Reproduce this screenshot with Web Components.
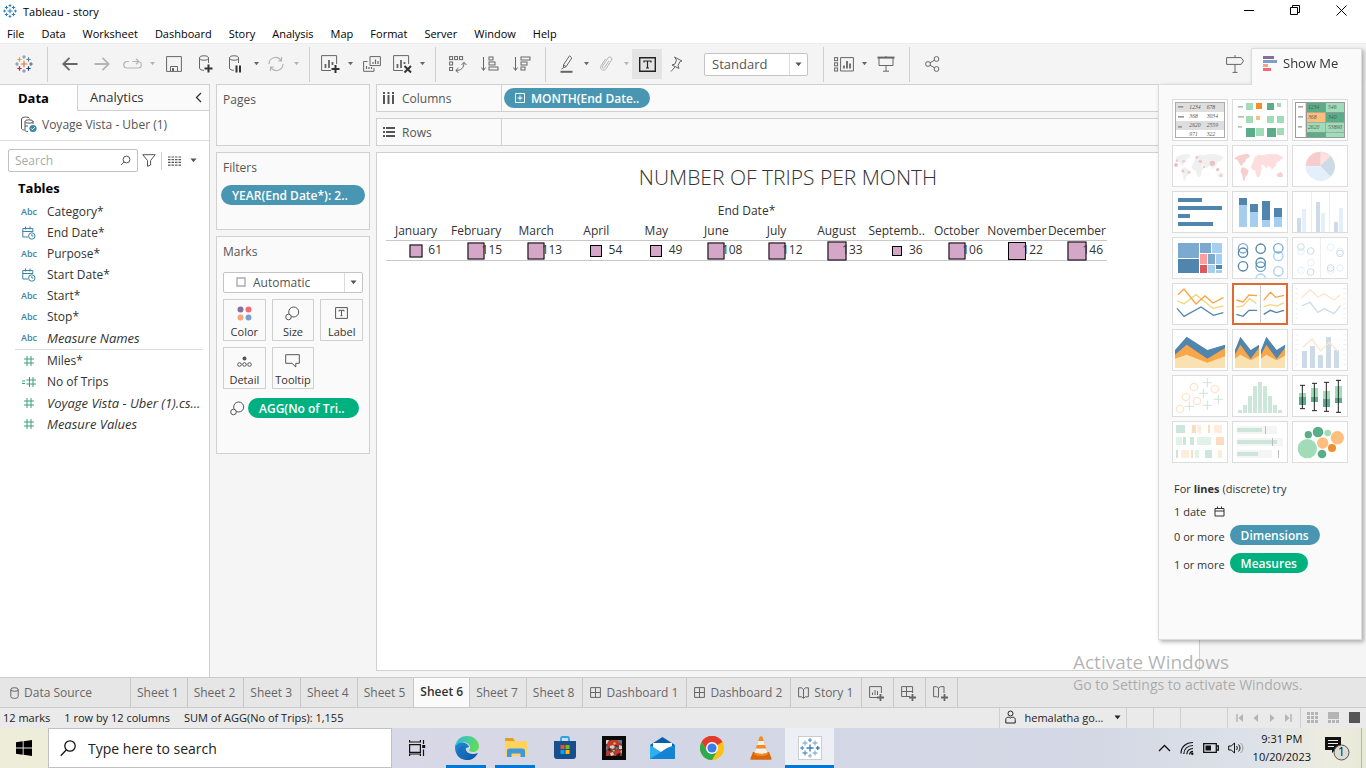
<!DOCTYPE html>
<html lang="en">
<head>
<meta charset="utf-8">
<title>Tableau - story</title>
<style>
html, body { margin: 0; }
body { font-family: "Open Sans", "Noto Sans", sans-serif; font-size: 12px; color: #333; background: #f5f5f5; }
</style>
</head>
<body>
<desktop-screen></desktop-screen>
<script>
/* ---------- helpers ---------- */
function define(name, css, render) {
  customElements.define(name, class extends HTMLElement {
    connectedCallback() {
      if (this.shadowRoot) return;
      const root = this.attachShadow({ mode: "open" });
      root.innerHTML = `<style>*{box-sizing:border-box}button,select,input{font:inherit;color:inherit;margin:0;outline:0}
button{border:0;background:none;padding:0}a{color:inherit;text-decoration:none}svg{display:block}${css}</style>${typeof render === "function" ? render(this) : render}`;
    }
  });
}
const plus = (x, y, r, c, w = 1) => `<path d="M${x - r} ${y}H${x + r}M${x} ${y - r}V${y + r}" stroke="${c}" stroke-width="${w}"/>`;
function logo(s, colors, w) {
  const k = s / 18, p = (x, y, r, i) => plus(x * k, y * k, r * k, colors[i % colors.length], w);
  return p(9, 9, 3.2, 0) + p(4.5, 4.5, 2.2, 1) + p(13.5, 4.5, 2.2, 2) + p(4.5, 13.5, 2.2, 3) + p(13.5, 13.5, 2.2, 4)
    + p(9, 2, 1.8, 5) + p(2, 9, 1.8, 6) + p(16, 9, 1.8, 7) + p(9, 16, 1.8, 8);
}
const cyl = `<path d="M3.5 3v10c0 1.5 2 2.300 4.500 2.300M12.500 3v5"/><ellipse cx="8" cy="3" rx="4.500" ry="2.200"/>`;
const dot = (x, y, w = 3, h = 3) => `<rect x="${x}" y="${y}" width="${w}" height="${h}"/>`;

/* name: [width, height, markup]; strokes take the current colour */
const ICONS = {
  logo: [18, 18, logo(18, ["#e8762d", "#eb9c45", "#5b879b", "#c72037", "#1f447e", "#7199a6", "#7199a6", "#59657f", "#7c84a8"], 1.2)],
  logoBlue: [14, 14, logo(14, ["#2f80b8"], 1)],
  logoTask: [20, 20, logo(20, ["#3a7fb0", "#8fb8d4", "#8fb8d4", "#5c9ac0", "#8fb8d4", "#5c9ac0", "#5c9ac0"], 1.3)],
  back: [16, 14, `<path d="M15.500 7H1.500M7.500 .8L1.200 7l6.300 6.200" stroke-width="1.800"/>`],
  fwd: [16, 14, `<path d="M.5 7h14M8.500 .8L14.800 7l-6.300 6.200" stroke-width="1.800"/>`],
  redo: [19, 12, `<path d="M6 3.500H4a3.200 3.200 0 0 0 0 6.500h11a3.200 3.200 0 0 0 0-6.500H9M13 .8l2.800 2.700L13 6.200" stroke-width="1.200"/>`],
  caret: [7, 5, `<path d="M.5 .5h6L3.500 4.200z" fill="currentColor" stroke="none"/>`],
  caretSmall: [5, 4, `<path d="M0 0h5L2.500 3.200z" fill="currentColor" stroke="none"/>`],
  save: [16, 16, `<path d="M.6 .6h14.800v14.800H.6zM4.500 15V10.500h7V15" /><path d="M6 12h2v3H6z" fill="currentColor" stroke="none"/>`],
  dbadd: [16, 18, `<g transform="translate(-2 0)">${cyl}</g><path d="M10.500 9.500v8M6.500 13.500h8" stroke="#333" stroke-width="2"/>`],
  dbpause: [16, 18, `<g transform="translate(-2 0)">${cyl}</g><path d="M8.500 10.500v7M12 10.500v7" stroke="#333" stroke-width="2"/>`],
  refresh: [18, 16, `<path d="M2 8a6.500 6.500 0 0 1 12-3.500M16 8a6.500 6.500 0 0 1-12 3.500M14.500 1v4H11M3.500 15v-4H7" stroke-width="1.200"/>`],
  newsheet: [19, 18, `<path d="M10 15.500H.6V.6h15V9"/><path d="M4.500 13V9M8 13V5M11.500 10V7" stroke-width="1.800"/><path d="M14.500 10v8M10.500 14h8" stroke="#333" stroke-width="2"/>`],
  dup: [18, 16, `<path d="M7 .6h10.400v9H7zM4.500 5.500H.6v9.800H11V12"/><path d="M10 8V6M12.500 8V3.500M15 8V5M3.500 13v-3M6 13v-2M8.500 13v-2" stroke-width="1.200"/>`],
  clear: [19, 18, `<path d="M10 15.500H.6V.6h15V9"/><path d="M4.500 13V9M8 13V5M11.500 9V7" stroke-width="1.800"/><path d="M11.500 11l6.500 6.500M18 11l-6.500 6.500" stroke="#333" stroke-width="2"/>`],
  swap: [18, 17, `${dot(.6, .6)}${dot(5.600, .6)}${dot(10.600, .6)}${dot(.6, 6)}${dot(.6, 11.500)}<path d="M7 14.500c5 0 8-2.500 8-8M12.500 9L15 6.300 17.500 9M9.500 12L6.800 14.500 9.500 16.800"/>`],
  sortup: [18, 16, `<path d="M2.500 1v13M.5 11.500L2.500 14.500l2-3"/>${dot(8, 1, 4, 3)}${dot(8, 6, 6, 3)}${dot(8, 11, 9, 3)}`],
  sortdown: [18, 16, `<path d="M2.500 1v13M.5 11.500L2.500 14.500l2-3"/>${dot(8, 1, 9, 3)}${dot(8, 6, 6, 3)}${dot(8, 11, 4, 3)}`],
  pen: [13, 18, `<path d="M9.500 .8l-6 9v3l2.500-1L11.800 3z M3.500 10l2.500 1.500M3 13l-1.500 1"/><path d="M.5 16.800h12" stroke-width="2"/>`],
  clip: [14, 16, `<path d="M9.800 5L5.500 11.500c-1 1.500-3 .3-2-1.300L9 2c1.600-2.300 5-.3 3.500 2L7 12.800c-2 3.200-7 .3-5-3L6.500 3"/>`],
  text: [17, 15, `<path d="M.7 .7h15.600v13.600H.7z" stroke-width="1.400"/><path d="M5 5.500V4h7v1.500M8.500 4v7M7 11h3" stroke-width="1.200"/>`],
  textSmall: [13, 12, `<path d="M.6 .6h11.800v10.800H.6z"/><path d="M4 4.500V3.300h5v1.200M6.500 3.300v5.400M5.500 8.700h2"/>`],
  pin: [13, 16, `<path d="M4.500 1l7.500 4-2 .5-2 4 1 3L2 9l3-1 1.500-4zM5 11l-4 4.500"/>`],
  cards: [20, 15, `${dot(.6, .6)}${dot(.6, 5.800)}${dot(.6, 11)}<path d="M6.600 .6h12.800v13.400H6.600z"/><path d="M10 11.500V8.500M13 11.500V4M16 11.500V6.500" stroke-width="1.800"/>`],
  present: [18, 16, `<path d="M.5 1.600h17" stroke-width="2"/><path d="M2 2v7.500h14V2M9 9.500v5.500M6 15.200h6M9 0v1"/>`],
  share: [15, 16, `<circle cx="3" cy="8" r="2.400"/><circle cx="11.500" cy="3" r="2.400"/><circle cx="11.500" cy="13" r="2.400"/><path d="M5 6.800l4.500-2.600M5 9.200l4.500 2.600"/>`],
  sign: [18, 18, `<path d="M.6 2.600h14.500l2.400 3.400-2.400 3.400H.6zM9 0v2.500M9 9.500v8M6.500 17.400h5"/>`],
  showme: [14, 15, `<g stroke="none"><path fill="#84709b" d="M0 0h11v3H0z"/><path fill="#7ba1cb" d="M0 4h14v3H0z"/><path fill="#f4a77c" d="M0 8h5v3H0z"/><path fill="#f76877" d="M0 12h8v3H0z"/></g>`],
  chevL: [7, 11, `<path d="M6 1L1.500 5.500 6 10" stroke-width="1.300"/>`],
  source: [17, 17, `<path d="M1.500 3v9.500c0 1 1.500 1.500 3 1.500M1.500 3c0-2.500 8-2.500 8-.5M13 5v3"/><ellipse cx="9" cy="5.500" rx="4" ry="1.700"/><path d="M5 5.500V14c0 1 1 1.500 3 1.500M5 10h3"/><circle cx="13" cy="12.500" r="3.600" fill="#3e87a8" stroke="none"/><path d="M11.300 12.500l1.200 1.300 2.200-2.500" stroke="#fff"/>`],
  search: [11, 11, `<circle cx="6.500" cy="4.500" r="3.400"/><path d="M4 7L1 10"/>`],
  funnel: [14, 13, `<path d="M.8 .7h12.400L8.600 6.500v4.500L5.500 12.300V6.500z"/>`],
  rows4: [13, 10, `<path d="M0 1h13M0 3.700h13M0 6.400h13M0 9.100h13" stroke-width="1.200" stroke-dasharray="2.500 1"/>`],
  hash: [12, 12, `<path d="M1 4h10M1 8h10M4 1v10M8 1v10"/>`],
  hashCalc: [15, 12, `<path d="M4.500 4H14M4.500 8H14M7.500 1v10M11 1v10M0 5h3M0 7.500h3"/>`],
  date: [14, 14, `<path d="M.8 6V2.500h10V6M.8 5.500h10M.8 5.500v5.500H6M3.500 .5v3M8 .5v3"/><circle cx="9.800" cy="10" r="3.200"/><path d="M9.800 8.300V10h1.500"/>`],
  cal: [11, 11, `<path d="M1 2.500h9v7.500H1zM1 5h9M3.500 .5v2.500M7.500 .5v2.500"/>`],
  cols: [12, 12, `<g fill="currentColor" stroke="none"><path d="M0 0h2v2H0zM4.500 0h2v2h-2zM9 0h2v2H9zM0 3h2v9H0zM4.500 3h2v9h-2zM9 3h2v9H9z"/></g>`],
  rows: [12, 11, `<g fill="currentColor" stroke="none"><path d="M0 0h2v2H0zM0 4h2v2H0zM0 8h2v2H0zM3 0h9v2H3zM3 4h9v2H3zM3 8h9v2H3z"/></g>`],
  plusbox: [10, 10, `<path d="M.5 .5h9v9h-9zM2.500 5h5M5 2.500v5"/>`],
  color: [15, 15, `<g stroke="none"><circle cx="3.500" cy="3.500" r="3" fill="#84709b"/><circle cx="11.500" cy="3.500" r="3" fill="#f76877"/><circle cx="3.500" cy="11.500" r="3" fill="#f4a77c"/><circle cx="11.500" cy="11.500" r="3" fill="#7ba1cb"/></g>`],
  size: [15, 15, `<circle cx="8.700" cy="6" r="5"/><circle cx="3.500" cy="11" r="2.800" fill="#fafafa"/>`],
  detail: [15, 11, `<circle cx="7.500" cy="2.500" r="2" fill="currentColor" stroke="none"/><circle cx="2.500" cy="8.500" r="1.800"/><circle cx="7.500" cy="8.500" r="1.800"/><circle cx="12.500" cy="8.500" r="1.800"/>`],
  tip: [15, 14, `<path d="M.7 .7h13.600v8.600h-3.500v3.700L7 9.300H.7z"/>`],
  square: [10, 10, `<path d="M1 1h8v8H1z" stroke="#aaa" stroke-width="1.400"/>`],
  ds: [9, 12, `<ellipse cx="4.500" cy="2.500" rx="3.700" ry="1.800"/><path d="M.8 2.500v7c0 2.500 7.400 2.500 7.400 0v-7"/>`],
  dash: [11, 11, `<path d="M.6 .6h9.800v9.800H.6zM5.500 .6v9.800M.6 5.500h9.800"/>`],
  story: [11, 12, `<path d="M5.500 2.500L3.500 .8H.6v9h3l1.900 1.500 1.900-1.500h3v-9H7.500zM5.500 2.500v8.500"/>`],
  newws: [16, 16, `<path d="M9 11.500H.6V.6h11.800V7M3.500 9V6.500M6 9V4M8.500 9V5"/><path d="M11.500 8v7M8 11.500h7" stroke-width="1.800"/>`],
  newdash: [16, 16, `<path d="M9 10.500H.6V.6h11V7M5.500 .6v10M.6 5.500h11"/><path d="M11.500 8v7M8 11.500h7" stroke-width="1.800"/>`],
  newstory: [16, 16, `<path d="M5.500 2L3.500 .7H.6v10h3l1.900 1M5.500 2v9M5.500 2L7.500 .7h3.500V7"/><path d="M11.500 8v7M8 11.500h7" stroke-width="1.800"/>`],
  user: [11, 15, `<circle cx="5.500" cy="3.500" r="2.500"/><path d="M.8 13V9.500c0-2 2-3 4.700-1.500 2.700-1.500 4.700-.5 4.700 1.500V13z"/>`],
  first: [8, 8, `<path d="M1 0v8" stroke-width="1.500"/><path d="M7 0v8L2.500 4z" fill="currentColor" stroke="none"/>`],
  prev: [8, 8, `<path d="M6 0v8L1.500 4z" fill="currentColor" stroke="none"/>`],
  next: [8, 8, `<path d="M2 0v8l4.500-4z" fill="currentColor" stroke="none"/>`],
  last: [8, 8, `<path d="M7 0v8" stroke-width="1.500"/><path d="M1 0v8l4.500-4z" fill="currentColor" stroke="none"/>`],
  grid9: [11, 11, `<path d="M0 1.500h11M0 5.500h11M0 9.500h11" stroke-width="3" stroke-dasharray="3 1"/>`],
  film: [11, 11, `<path d="M0 0h11v7H0z" fill="currentColor" stroke="none"/><path d="M0 9.500h11" stroke-width="3" stroke-dasharray="3 1"/>`],
  full: [11, 11, `<path d="M0 0h11v11H0z" fill="currentColor" stroke="none"/>`],
  min: [10, 10, `<path d="M0 5.500h10"/>`],
  max: [10, 10, `<path d="M.5 2.500h7v7h-7zM2.500 2.500v-2h7v7h-2"/>`],
  close: [11, 11, `<path d="M.5 .5l10 10M10.500 .5l-10 10"/>`],
  win: [16, 16, `<path d="M0 2.300L6.700 1.300V7.600H0zM7.600 1.200L16 0V7.600H7.600zM0 8.500H6.700V14.700L0 13.800zM7.600 8.500H16V16L7.600 14.800z" fill="#000" stroke="none"/>`],
  searchBig: [16, 17, `<circle cx="10" cy="6" r="5.200" stroke-width="1.300"/><path d="M6.200 10L.8 15.800" stroke-width="1.300"/>`],
  taskview: [17, 16, `<path d="M.6 4.600h10.800v7.800H.6zM.6 0v2h10.800V0M.6 16v-2h10.800v2M14.500 0v4M14.500 9.500V16" stroke-width="1.200"/><path d="M13.200 5h3v3h-3z" fill="currentColor" stroke="none"/>`],
  edge: [26, 26, `<defs><linearGradient id="e1" x1="0" y1="0" x2="1" y2=".3"><stop offset="0" stop-color="#2bb6e8"/><stop offset="1" stop-color="#5fdc5c"/></linearGradient><linearGradient id="e2" x1="0" y1="0" x2="1" y2="1"><stop offset="0" stop-color="#1c8fdc"/><stop offset="1" stop-color="#0c4f9e"/></linearGradient></defs><g stroke="none"><path fill="url(#e2)" d="M1 12c0-4 6-6 10-4 3 1.500 4 3 4 4l-3 1c-1 3 3 8 12 5-3 6-8 7.500-12 7C5 24.500 1 19 1 12z"/><path fill="url(#e1)" d="M1 12C2 4 8 1 13 1c7 0 12 5 12 10.500C25 15 22 17 19 17c-2.500 0-4.500-.8-4-2 1-1 1.300-2 1-3.500C15 7.500 10 6.500 7 7.500 4 8.500 2 10 1 12z"/><path fill="#1a6ab8" d="M10 11c-3 4 0 12 6 13.500-6 1-12-2-12-8 0-3 3-5.500 6-5.500z" opacity=".6"/></g>`],
  explorer: [24, 20, `<g stroke="none"><path fill="#e6a11c" d="M1 0h8l2 3h11v4H1z"/><path fill="#ffd35c" d="M1 3h22v15H1z"/><path fill="#3f97dc" d="M3 19v-6c0-1.500 1-2.500 2.500-2.500h13c1.500 0 2.500 1 2.500 2.500v6h-4.500v-3.500h-9V19z"/></g>`],
  store: [24, 24, `<path d="M8 6V2.500C8 1.500 8.500 1 9.500 1h5c1 0 1.500.5 1.500 1.500V6" stroke="#2ba6e0" stroke-width="1.800"/><g stroke="none"><path fill="#174f8e" d="M1 5h22v15a3 3 0 0 1-3 3H4a3 3 0 0 1-3-3z"/><path fill="#f25022" d="M7.500 9h4v4h-4z"/><path fill="#7fba00" d="M12.500 9h4v4h-4z"/><path fill="#00a4ef" d="M7.500 14h4v4h-4z"/><path fill="#ffb900" d="M12.500 14h4v4h-4z"/></g>`],
  game: [24, 24, `<g stroke="none"><path fill="#0a0a0a" d="M0 0h24v24H0z"/><path fill="#7d4038" d="M4 4h16v16H4z"/><path fill="#c8372a" d="M6 6l4-2 5 0 3 3-2 3-4-2-4 3-3 1zM5 14l3 2-2 4H4zM13 15l4-1 2 3-3 3h-4z"/><path fill="#d9cfc4" d="M4 4h3l-2 4H4zM8 10l3-1 2 2-2 2-3-1zM17 9l3 1v3l-3 0zM8 17l3-1 1 3-3 1z"/><path fill="#5a80a4" d="M15 4h5v4l-2-1zM4 10l2 1-1 3H4zM14 11l2 1-2 2z"/><path fill="#e0b04a" d="M12 6l2 1-1 2-2-1zM10 14l3 0-1 2zM18 15l2-1v4z"/><path fill="#2a1a18" d="M7 12l2 2-1 1-2-1zM13 9l3 1-1 1zM15 18l3-1v3h-4z"/></g>`],
  mail: [25, 23, `<g stroke="none"><path fill="#0b5fa8" d="M0 8L12.500 0 25 8v4H0z"/><path fill="#fff" d="M3 6h19v9H3z"/><path fill="#2fb0ee" d="M0 8l12.500 8L25 8v14H0z"/><path fill="#1583d4" d="M0 22L17 11l8-3v14z"/></g>`],
  chrome: [24, 24, `<g stroke="none"><circle cx="12" cy="12" r="12" fill="#fbc116"/><path fill="#e33b2e" d="M12 12L1.600 6A12 12 0 0 1 22.400 6z"/><path fill="#e33b2e" d="M12 6h10.400a12 12 0 0 0-20.800 0L7 15z"/><path fill="#2da94f" d="M1.600 6a12 12 0 0 0 10.400 18l5.200-9-10.400 0z"/><circle cx="12" cy="12" r="6" fill="#fff"/><circle cx="12" cy="12" r="4.600" fill="#3a7de8"/></g>`],
  vlc: [22, 24, `<g stroke="none"><path fill="#d9660a" d="M3 16h16l2.500 6.500c.2.800-.2 1.300-1 1.300H1.500c-.8 0-1.200-.5-1-1.300z"/><path fill="#f58a1f" d="M9.500 1c.5-1 2.500-1 3 0l5.500 17c-2 2.500-12 2.500-14 0z"/><path fill="#f2f0ee" d="M8.200 5h5.600l1.200 4H7zM5.800 12.500h10.400l1.200 4c-3 1.500-9.800 1.500-12.800 0z"/></g>`],
  tray: [13, 8, `<path d="M1 7l5.500-5.500L12 7" stroke-width="1.300"/>`],
  wifi: [14, 14, `<path d="M1 12.500C1 6 6 1.500 13 1.500M3.800 13C4 8 7.500 4.700 13 4.500M6.800 13.300C7 10 9.300 7.800 13 7.500M9.600 13.500c.2-2 1.400-3 3.400-3.200" stroke-width="1.200"/><circle cx="12.300" cy="12.800" r="1.200" fill="currentColor" stroke="none"/>`],
  batt: [16, 10, `<path d="M.7 .7h12.600v8.600H.7zM14 3h1.400v4H14" stroke-width="1.300"/><path d="M2.500 2.500h5.500v5H2.500z" fill="currentColor" stroke="none"/>`],
  vol: [17, 12, `<path d="M.7 4h2.500L6.500 1v10L3.200 8H.7zM8.500 4c1 1.200 1 2.800 0 4"/><path d="M10.500 2.500c2 2 2 5 0 7" /><path d="M12.700 1c3 3 3 7 0 10" stroke="#999"/>`],
  notif: [26, 26, `<path d="M1 2h16v13h-6l-3 3v-3H1z" fill="#111" stroke="none"/><path d="M4 5.500h10M4 8.500h10M4 11.500h6" stroke="#ecece0"/><circle cx="17.500" cy="17.500" r="7.500" fill="#dcdcd6" stroke="#555"/>`]
};
define("svg-icon", `:host{display:block;flex:none}`, el => {
  const [w, h, m] = ICONS[el.getAttribute("name")];
  return `<svg width="${w}" height="${h}" viewBox="0 0 ${w} ${h}" fill="none" stroke="currentColor" aria-hidden="true">${m}</svg>`;
});

/* ---------- window chrome ---------- */
define("title-bar", `:host{display:flex;align-items:center;height:22px;background:#fff;color:#000;font-size:11px;padding:0 2px 0 3px}
.app{width:14px;margin-right:6px}.name{flex:1}button{width:46px;height:20px;display:grid;place-items:center;align-self:start}`,
`<svg-icon class="app" name="logoBlue"></svg-icon><span class="name"><slot></slot></span>
<button aria-label="Minimize"><svg-icon name="min"></svg-icon></button><button aria-label="Restore"><svg-icon name="max"></svg-icon></button><button aria-label="Close"><svg-icon name="close"></svg-icon></button>`);

define("menu-bar", `:host{display:block;background:#fff;color:#000;font-size:11px}nav{display:flex;height:21px;align-items:center;gap:17px;padding:2px 7px 0}`,
`<nav>${["File", "Data", "Worksheet", "Dashboard", "Story", "Analysis", "Map", "Format", "Server", "Window", "Help"].map(t => `<a href="#">${t}</a>`).join("")}</nav>`);

/* drop-down with a separate arrow cell */
define("drop-down", `:host{display:flex;position:relative;background:#fff;border:1px solid #c4c4c4;border-radius:2px;color:#555}
select{appearance:none;flex:1;min-width:0;border:0;background:none;padding:0 8px;padding-left:var(--indent,7px)}
.arrow{width:18px;border-left:1px solid #dcdcdc;display:grid;place-items:center;color:#555}
.lead{position:absolute;left:12px;top:4px}`,
el => `${el.hasAttribute("icon") ? `<svg-icon class="lead" name="${el.getAttribute("icon")}"></svg-icon>` : ""}<select aria-label="${el.getAttribute("label")}"><option>${el.getAttribute("value")}</option></select><span class="arrow"><svg-icon name="caret"></svg-icon></span>`);

const tb = (n, label, cls = "") => `<button class="${cls}" aria-label="${label}"><svg-icon name="${n}"></svg-icon></button>`;
const car = (cls = "") => tb("caretSmall", "More options", "c " + cls);
define("tool-bar", `:host{display:flex;align-items:center;height:41px;background:#f4f4f4;border-top:1px solid #ececec;color:#666;padding-right:115px}
button{width:32px;height:30px;display:grid;place-items:center;flex:none}
.n{width:28px}.c{width:12px}.logo{width:47px}.off{color:#b4b4b4}.on{width:30px;background:#e4e4e4;color:#222}
i{width:1px;height:35px;background:#cfcfcf;margin:0 6px 0 7px}.logo+i{margin-left:0}
drop-down{width:104px;height:23px;margin:0 8px 0 14px;font-size:13px}.sign{margin-left:auto}`,
tb("logo", "Start page", "logo") + "<i></i>" + tb("back", "Undo") + tb("fwd", "Redo", "off") + tb("redo", "Replay", "n off") + car("off") + tb("save", "Save") + tb("dbadd", "New data source")
+ tb("dbpause", "Pause updates", "n") + car() + tb("refresh", "Run update", "n off") + car("off") + "<i></i>" + tb("newsheet", "New worksheet", "n") + car() + tb("dup", "Duplicate") + tb("clear", "Clear sheet", "n") + car() + "<i></i>"
+ tb("swap", "Swap rows and columns") + tb("sortup", "Sort ascending") + tb("sortdown", "Sort descending") + "<i></i>" + tb("pen", "Highlight", "n") + car() + tb("clip", "Group", "n off") + car("off") + tb("text", "Show mark labels", "on") + tb("pin", "Fix axes", "n")
+ `<drop-down label="Fit" value="Standard"></drop-down><i></i>` + tb("cards", "Show cards", "n") + car() + tb("present", "Presentation mode") + "<i></i>" + tb("share", "Share") + tb("sign", "Guide", "sign"));

/* ---------- data pane ---------- */
define("field-item", `:host{display:flex;align-items:center;height:21px;color:#333}
.i{width:26px;display:grid;place-items:center;margin-right:5px;color:#3d84a2}:host([measure]) .i{color:#3aa07c}
.abc{font-size:9px;font-weight:600}:host([auto]) a{font-style:italic;font-size:13px;line-height:16px}`,
el => { const k = el.getAttribute("kind"); return `<span class="i">${k === "abc" ? `<span class="abc">Abc</span>` : `<svg-icon name="${k}"></svg-icon>`}</span><a href="#"><slot></slot></a>`; });

define("data-pane", `:host{display:flex;flex-direction:column;background:#fff;border-top:1px solid #d0d0d0;border-right:1px solid #d0d0d0}
.tabs{display:flex;height:26px;font-size:13px}.tabs button{text-align:left}
.data{width:77px;padding:0 0 1px 18px;font-weight:700;color:#000}
.ana{flex:1;display:flex;align-items:center;justify-content:space-between;padding:0 7px 1px 12px;background:#fafafa;border:solid #d0d0d0;border-width:0 0 1px 1px}
.src{display:flex;align-items:center;height:30px;padding:0 0 2px 20px;gap:5px;border-bottom:1px solid #dedede;color:#555}
.find{display:flex;align-items:center;padding:8px 0 0 8px;height:31px;color:#555}
label{display:flex;align-items:center;width:130px;height:23px;border:1px solid #c0c0c0;border-radius:2px;padding-right:6px}
input{border:0;background:none;flex:1;min-width:0;padding:0 6px}input::placeholder{color:#aaa;opacity:1}
.find button{display:grid;place-items:center;width:22px;height:22px}.find i{width:1px;height:18px;background:#ccc;margin:0 1px}.find .cc{width:16px}
h2{font-size:13px;line-height:18px;margin:7px 0 4px 18px;color:#000}
.list{padding-left:16px}hr{border:0;border-top:1px solid #dcdcdc;margin:1px 6px 0 15px}`,
`<div class="tabs"><button class="data">Data</button><button class="ana">Analytics<svg-icon name="chevL"></svg-icon></button></div>
<div class="src"><svg-icon name="source"></svg-icon><span>Voyage Vista - Uber (1)</span></div>
<div class="find"><label><input type="text" placeholder="Search" aria-label="Search fields"><svg-icon name="search"></svg-icon></label>
<button aria-label="Filter"><svg-icon name="funnel"></svg-icon></button><i></i><button aria-label="View"><svg-icon name="rows4"></svg-icon></button><button class="cc" aria-label="View options"><svg-icon name="caret"></svg-icon></button></div>
<h2>Tables</h2>
<div class="list"><field-item kind="abc">Category*</field-item><field-item kind="date">End Date*</field-item><field-item kind="abc">Purpose*</field-item><field-item kind="date">Start Date*</field-item>
<field-item kind="abc">Start*</field-item><field-item kind="abc">Stop*</field-item><field-item kind="abc" auto>Measure Names</field-item></div><hr>
<div class="list"><field-item kind="hash" measure>Miles*</field-item><field-item kind="hashCalc" measure>No of Trips</field-item><field-item kind="hash" measure auto>Voyage Vista - Uber (1).cs...</field-item><field-item kind="hash" measure auto>Measure Values</field-item></div>`);

/* ---------- cards and shelves ---------- */
define("field-pill", `:host{display:flex;align-items:center;height:20px;border-radius:10px;background:#4996b2;color:#fff;font-weight:600;padding:0 11px;gap:6px;white-space:nowrap}
:host([measure]){background:#00b180}`, `<slot name="icon"></slot><slot></slot>`);

define("side-card", `:host{display:block;background:#fafafa;border:1px solid #d0d0d0}h3{margin:0;font-size:12px;font-weight:400;line-height:30px;padding-left:6px;color:#555}`,
el => `<h3>${el.getAttribute("heading")}</h3><slot></slot>`);

define("mark-button", `:host{display:block}button{width:100%;height:42px;background:#fafafa;border:1px solid #cfcfcf;display:grid;grid-template-rows:26px 12px;align-content:start;justify-items:center;align-items:center;font-size:11px;line-height:12px;color:#333}
svg-icon{color:#555}`, el => `<button><svg-icon name="${el.getAttribute("icon")}"></svg-icon><span><slot></slot></span></button>`);

define("card-column", `:host{display:flex;flex-direction:column;gap:6px}
.pages{min-height:62px}.filters{min-height:78px}.marks{min-height:218px}
.filters field-pill{margin:2px 4px 0}.body{display:grid;gap:6px;padding:5px 6px 0}
drop-down{height:21px;--indent:29px}.btns{display:grid;grid-template-columns:repeat(3,1fr);gap:6px}
.enc{display:flex;align-items:center;gap:3px;margin:3px 4px 0 7px;color:#555}.enc field-pill{flex:1}`,
`<side-card class="pages" heading="Pages"></side-card>
<side-card class="filters" heading="Filters"><field-pill>YEAR(End Date*): 2..</field-pill></side-card>
<side-card class="marks" heading="Marks"><div class="body"><drop-down label="Mark type" value="Automatic" icon="square"></drop-down>
<div class="btns"><mark-button icon="color">Color</mark-button><mark-button icon="size">Size</mark-button><mark-button icon="textSmall">Label</mark-button><mark-button icon="detail">Detail</mark-button><mark-button icon="tip">Tooltip</mark-button></div>
<div class="enc"><svg-icon name="size"></svg-icon><field-pill measure>AGG(No of Tri..</field-pill></div></div></side-card>`);

define("shelf-row", `:host{display:flex;height:28px;background:#fafafa;border:1px solid #d0d0d0;color:#555}
.n{width:125px;display:flex;align-items:center;gap:7px;padding-left:6px;border-right:1px solid #d0d0d0}.f{flex:1;display:flex;align-items:center;padding-left:2px}`,
el => `<div class="n"><svg-icon name="${el.getAttribute("icon")}"></svg-icon>${el.getAttribute("label")}</div><div class="f"><slot></slot></div>`);

const MONTHS = [["January", 61, 13], ["February", 115, 17], ["March", 113, 17], ["April", 54, 12], ["May", 49, 12], ["June", 108, 17], ["July", 112, 17], ["August", 133, 19], ["Septemb..", 36, 10], ["October", 106, 17], ["November", 122, 18], ["December", 146, 19]];
define("viz-sheet", `:host{display:block;background:#fff;border:1px solid #d0d0d0;padding:9px}
h1{margin:0;font-size:21px;line-height:31px;font-weight:300;text-align:center;color:#333}
table{border-collapse:collapse;table-layout:fixed;width:721px;margin-top:8px}
caption{line-height:20px}th{font-weight:400;padding:0;line-height:19px;height:19px;white-space:nowrap}
td{position:relative;height:20px;padding:0 4px 2px 0;line-height:16px;text-align:right;border:solid #c8c8c8;border-width:1px 0}
td span{position:relative}
td::before{content:"";position:absolute;left:50%;top:50%;width:var(--s);height:var(--s);transform:translate(-50%,-50%);background:#d4a6c8;border:1px solid #000;box-sizing:border-box}`,
`<h1>NUMBER OF TRIPS PER MONTH</h1><table><caption>End Date*</caption><thead><tr>${MONTHS.map(m => `<th scope="col">${m[0]}</th>`).join("")}</tr></thead><tbody><tr>${MONTHS.map(m => `<td style="--s:${m[2]}px"><span>${m[1]}</span></td>`).join("")}</tr></tbody></table>`);

/* ---------- Show Me ---------- */
const R = (c, list) => `<g fill="${c}">${list.map(r => `<rect x="${r[0]}" y="${r[1]}" width="${r[2]}" height="${r[3]}"/>`).join("")}</g>`;
const L = (c, d, w = 4) => `<path d="${d}" fill="none" stroke="${c}" stroke-width="${w}"/>`;
const P = (c, d) => `<path d="${d}" fill="${c}"/>`;
const O = (c, list, r = 14, w = 3) => `<g fill="none" stroke="${c}" stroke-width="${w}">${list.map(p => `<circle cx="${p[0]}" cy="${p[1]}" r="${r}"/>`).join("")}</g>`;
const D = (c, list) => `<g fill="${c}">${list.map(p => `<circle cx="${p[0]}" cy="${p[1]}" r="${p[2]}"/>`).join("")}</g>`;
const T = (list) => `<g fill="#555" font-size="17" font-family="Liberation Serif, serif" font-style="italic">${list.map(t => `<text x="${t[0]}" y="${t[1]}">${t[2]}</text>`).join("")}</g>`;
const AMER = "M6 17l12-9 18-4 12-2 6 8-6 6-6 2-3 10-6 3-2 8-7-4-4-8-4-7-8-2zM28 44l9-1 13 9-3 12-7 8-3 12-4-2-2-16-5-10z";
const EURA = "M64 25l4-13 12-7 14 2 14-4 28 1 18 9-10 10-10 5-3 12-7 4-4 6-5-9-7-3-5 9-5-7-8-6-3 8 4 4-4 8-3 16-8 3-5-10-1-10-9-3-5-9 5-9z";
const AUS = "M136 62l10-5 7 6-2 9-12 0-5-4z";
const THUMBS = [
  ["text table", 36, 27, R("#ababab", [[45, 36, 150, 108]]) + R("#fff", [[48, 39, 144, 102]]) + R("#dedede", [[48, 39, 144, 27], [48, 93, 144, 27]]) + R("#999", [[54, 48, 16, 5], [54, 78, 18, 5], [54, 108, 12, 5]]) + T([[88, 57, "1234"], [140, 57, "678"], [88, 85, "368"], [140, 85, "3034"], [88, 112, "2620"], [140, 112, "2559"], [88, 137, "971"], [140, 137, "322"]])],
  ["heat map", 216, 27, R("#bbb", [[234, 48, 15, 5], [234, 78, 18, 5], [234, 108, 12, 5]]) + R("#a0dcb8", [[258, 39, 21, 21], [351, 39, 12, 12], [258, 78, 21, 21], [321, 78, 21, 21], [351, 78, 21, 21], [288, 114, 24, 24], [351, 114, 21, 21]]) + R("#f28e2b", [[288, 39, 18, 18]]) + R("#ffbe7d", [[288, 78, 12, 12]]) + R("#59ad88", [[321, 39, 21, 21], [258, 114, 27, 27], [321, 114, 27, 27]])],
  ["highlight table", 396, 27, R("#999", [[405, 36, 150, 108]]) + R("#fff", [[408, 39, 29, 102]]) + R("#59ad88", [[441, 39, 55, 27], [498, 68, 54, 28], [441, 128, 55, 13]]) + R("#ffbe7d", [[441, 68, 55, 28]]) + R("#a0dcb8", [[498, 39, 54, 27], [441, 98, 55, 28], [498, 98, 54, 28], [498, 128, 54, 13]]) + R("#aaa", [[414, 48, 15, 5], [414, 78, 15, 5], [414, 108, 12, 5]]) + T([[444, 57, "1234"], [504, 57, "546"], [444, 88, "368"], [504, 88, "340"], [444, 117, "2620"], [504, 117, "53890"]])],
  ["symbol map", 36, 165, `<g transform="translate(38 189)">${P("#f0f0f0", AMER)}${P("#f0f0f0", EURA)}${P("#f0f0f0", AUS)}</g>` + D("#ecc0c4", [[48, 225, 6], [157, 220, 8], [121, 214, 5], [69, 243, 4], [173, 239, 5], [111, 202, 4]]) + D("#f3c9cb", [[71, 214, 4], [87, 247, 5], [132, 231, 4], [183, 257, 4], [51, 212, 4]])],
  ["map", 216, 165, `<g transform="translate(216 189)">${P("#f7cfcf", AMER)}${P("#fcdede", EURA)}${P("#f7cfcf", AUS)}</g>`],
  ["pie chart", 396, 165, P("#cddbe8", "M481 229V185A44 44 0 0 1 512 260z") + P("#ffe0e0", "M481 229V185A44 44 0 0 1 512 198z") + P("#f6cccc", "M481 229H437A44 44 0 0 1 481 185z") + P("#e3f0fb", "M481 229H437A44 44 0 0 0 512 260z")],
  ["horizontal bars", 36, 303, R("#5085ae", [[54, 324, 72, 12], [54, 348, 132, 12], [54, 372, 36, 12], [54, 396, 105, 12]])],
  ["stacked bars", 216, 303, R("#5085ae", [[237, 324, 24, 21], [270, 342, 24, 24], [306, 333, 24, 57], [342, 354, 24, 27]]) + R("#a6cfef", [[237, 345, 24, 66], [270, 366, 24, 45], [306, 390, 24, 21], [342, 381, 24, 30]])],
  ["side-by-side bars", 396, 303, R("#eee", [[453, 306, 3, 120], [507, 306, 3, 120]]) + R("#cddbe8", [[411, 384, 12, 42], [468, 336, 12, 90], [522, 396, 12, 30]]) + R("#e3f0fb", [[426, 357, 12, 69], [483, 369, 12, 57], [537, 354, 12, 72]])],
  ["treemap", 36, 441, R("#7ba9cf", [[54, 459, 63, 45], [120, 459, 33, 30], [144, 492, 21, 30]]) + R("#5085ae", [[54, 507, 63, 42], [168, 525, 18, 12]]) + R("#a6cfef", [[156, 459, 30, 30], [168, 492, 18, 30], [144, 525, 21, 24], [168, 540, 18, 9]]) + R("#ff9d9a", [[120, 492, 21, 30]]) + R("#e15759", [[120, 525, 21, 24]])],
  ["circle views", 216, 441, O("#a6cfef", [[355, 498], [355, 544], [302, 566]], 14, 4) + O("#7ba9cf", [[249, 475], [355, 475], [302, 530]], 14, 4) + O("#5085ae", [[249, 488], [249, 529], [302, 476], [302, 518]], 14, 4)],
  ["side-by-side circles", 396, 441, R("#eee", [[480, 444, 3, 120]]) + O("#e3f0fb", [[423, 485], [452, 518], [423, 541], [512, 472], [540, 534], [540, 484], [512, 541]], 10) + O("#cddbe8", [[423, 471], [452, 483], [452, 546], [540, 490], [512, 534]], 10)],
  ["lines (continuous)", 36, 21, L("#f5d57e", "M51 75l21 8 36-27 51 41 31-7") + L("#f9a64a", "M54 56l18-17 36 45 27-24 24 21 31-16") + L("#5085ae", "M51 97l21 24 51-28 37 25 30-8")],
  ["lines (discrete)", 216, 21, R("#ccc", [[300, 27, 3, 114]]) + L("#f5d57e", "M229 93l20-3 20-22 20 14M311 92l20-6 20 4 21-10") + L("#f9a64a", "M229 72l20 6 18-21 24 2M311 73l20-24 16 15 25-6") + L("#5085ae", "M229 115l20 6 18-18h24M311 115l20-12 18 7 23-7")],
  ["dual lines", 396, 21, L("#eee", "M410 37v92M554 37v92", 9).replace("/>", ` stroke-dasharray="3 12"/>`) + L("#ffe4cc", "M425 65l25-24 24 22 19-10 29 19 19-15") + L("#cddbe8", "M425 90l25-11 24 30 19-11 29 15 20-24")],
  ["area (continuous)", 36, 159, P("#5085ae", "M45 222l35-40 62 40 53-16v70H45z") + P("#f9a64a", "M45 236l35-30 62 42 53-32v60H45z") + P("#fae1b2", "M45 248l35-12 62 24 53-19v35H45z")],
  ["area (discrete)", 216, 159, P("#5085ae", "M225 222l16-40 31 40 25-16v70h-72zM303 222l16-40 31 40 25-16v70h-72z") + P("#f9a64a", "M225 236l16-30 31 42 25-32v60h-72zM303 236l16-30 31 42 25-32v60h-72z") + P("#fae1b2", "M225 248l16-12 31 17 25-14v37h-72zM303 248l16-12 31 17 25-14v37h-72z")],
  ["dual combination", 396, 159, L("#eee", "M410 175v97M554 175v97", 9).replace("/>", ` stroke-dasharray="3 12"/>`) + R("#cddbe8", [[426, 225, 15, 51], [450, 210, 15, 66], [474, 237, 15, 39], [498, 183, 15, 93], [522, 222, 15, 54]]) + L("#ffe4cc", "M429 213l27-24 25 36 27-26 26 28")],
  ["scatter plot", 36, 297, O("#ffe4cc", [[102, 333], [165, 339], [78, 363], [111, 375], [60, 399]], 11, 4) + [[142, 320], [130, 352], [175, 370], [88, 391], [142, 388]].map(p => plus(p[0], p[1], 14, "#cce6da", 3)).join("")],
  ["histogram", 216, 297, R("#cce6da", [[234, 402, 12, 9], [249, 387, 12, 24], [264, 360, 12, 51], [279, 330, 12, 81], [294, 318, 12, 93], [309, 330, 12, 81], [324, 360, 12, 51], [339, 387, 12, 24], [354, 402, 12, 9]])],
  ["box-and-whisker plot", 396, 297, R("#a0dcb8", [[417, 351, 21, 12], [453, 336, 21, 27], [489, 345, 21, 24], [525, 330, 21, 36]]) + R("#59ad88", [[417, 363, 21, 24], [453, 363, 21, 15], [489, 369, 21, 24], [525, 366, 21, 15]]) + L("#222", "M427 328v70M420 328h15M420 398h15M463 322v82M456 322h15M456 404h15M499 319v87M492 319h15M492 406h15M535 313v96M528 313h15M528 409h15", 3)],
  ["gantt", 36, 435, R("#cce6da", [[48, 447, 27, 24], [69, 483, 9, 24], [90, 483, 12, 24], [48, 522, 6, 24], [135, 522, 21, 24]]) + R("#e1f2e9", [[48, 483, 18, 24], [111, 483, 42, 24], [105, 522, 12, 24]]) + R("#fbdcc0", [[96, 447, 12, 24], [144, 447, 6, 24], [168, 483, 24, 24], [93, 522, 6, 24]]) + R("#ffecd9", [[111, 447, 12, 24], [162, 447, 24, 24], [63, 522, 24, 24], [174, 522, 12, 24]])],
  ["bullet graph", 216, 435, R("#f5f5f5", [[231, 450, 120, 24], [231, 486, 138, 24], [231, 522, 105, 24]]) + R("#cce6da", [[231, 456, 75, 12], [231, 492, 120, 12], [231, 528, 63, 12]]) + R("#bbb", [[315, 450, 3, 24], [336, 486, 3, 24], [354, 522, 3, 24]])],
  ["packed bubbles", 396, 435, D("#a0dcb8", [[442, 518, 29], [503, 471, 10]]) + D("#59ad88", [[474, 468, 16], [445, 476, 11], [486, 534, 13]]) + D("#ffbe7d", [[532, 485, 20], [488, 501, 17]]) + D("#f28e2b", [[516, 516, 12]])]
];
define("chart-thumb", `:host{display:block}button{display:block;width:56px;height:42px;background:#fff;border:1px solid #dcdcdc;overflow:hidden}
:host([selected]) button{border:2px solid #dd6b34}svg{margin:-1px}:host([selected]) svg{margin:-2px}`,
el => { const t = THUMBS[el.getAttribute("index")]; return `<button aria-label="${t[0]}"><svg width="56" height="42" viewBox="${t[1]} ${t[2]} 168 126">${t[3]}</svg></button>`; });

define("show-me", `:host{display:flex;flex-direction:column;filter:drop-shadow(2px 2px 2px rgba(0,0,0,.3));font-size:11px;color:#333}
.tab{align-self:flex-end;width:111px;height:37px;margin-bottom:-1px;position:relative;display:flex;align-items:center;gap:6px;padding:0 0 8px 11px;background:#fafafa;border:1px solid #dcdcdc;border-bottom:0;font-size:13px;color:#333}
.panel{background:#fafafa;border:1px solid #dcdcdc;padding:14px 13px;height:556px}
.grid{display:grid;grid-template-columns:repeat(3,56px);gap:4px;margin-bottom:14px}
.line{display:flex;align-items:center;height:23px;padding-left:2px;gap:8px}.pl{height:28px;gap:5px;margin-top:-2px}.pl+.pl{margin-top:0}
.pl span{padding-top:3px}field-pill{font-size:12px}b{font-weight:700}`,
`<button class="tab"><svg-icon name="showme"></svg-icon>Show Me</button>
<div class="panel"><div class="grid">${THUMBS.map((t, i) => `<chart-thumb index="${i}"${i === 13 ? " selected" : ""}></chart-thumb>`).join("")}</div>
<div class="line"><span>For <b>lines</b> (discrete) try</span></div><div class="line"><span>1 date</span><svg-icon name="cal"></svg-icon></div>
<div class="line pl"><span>0 or more</span><field-pill>Dimensions</field-pill></div><div class="line pl"><span>1 or more</span><field-pill measure>Measures</field-pill></div></div>`);

/* ---------- bottom bars ---------- */
define("sheet-tab", `:host{display:block;border-right:1px solid #c6c6c6}button{height:29px;width:100%;display:flex;align-items:center;gap:5px;padding:0 8px 0 6px;color:#666;white-space:nowrap}
:host([icon]) button{padding:0 8px 0 7px}
:host([active]){background:#fafafa}:host([active]) button{font-weight:600;color:#333;padding:0 6px 2px}:host([new]) button{padding:2px 8px 0 7px}`,
el => `<button${el.hasAttribute("new") ? ` aria-label="${el.getAttribute("new")}"` : ""}>${el.hasAttribute("icon") ? `<svg-icon name="${el.getAttribute("icon")}"></svg-icon>` : ""}<slot></slot></button>`);
define("sheet-tabs", `:host{display:flex;height:31px;background:#e6e6e6;border:solid #cacaca;border-width:1px 0}.src{width:131px;padding-left:3px}`,
`<sheet-tab class="src" icon="ds">Data Source</sheet-tab>${[1, 2, 3, 4, 5, 6, 7, 8].map(n => `<sheet-tab${n === 6 ? " active" : ""}>Sheet ${n}</sheet-tab>`).join("")}
<sheet-tab icon="dash">Dashboard 1</sheet-tab><sheet-tab icon="dash">Dashboard 2</sheet-tab><sheet-tab icon="story">Story 1</sheet-tab><sheet-tab icon="newws" new="New worksheet"></sheet-tab><sheet-tab icon="newdash" new="New dashboard"></sheet-tab><sheet-tab icon="newstory" new="New story"></sheet-tab>`);

define("status-bar", `:host{display:flex;height:20px;background:#eaeaea;font-size:11px;color:#222}
.t{flex:1;display:flex;align-items:center;gap:14px;padding:0 0 1px 3px}.c{border-left:1px solid #cfcfcf;display:flex;align-items:center;justify-content:center}
.u{width:127px;gap:8px;padding-bottom:1px}.u button{display:flex;align-items:center;gap:10px}.s{width:27px}.w{width:47px}.nav{width:73px;gap:8px;color:#b4b4b4;padding-bottom:1px}.v{width:66px;gap:10px;color:#b4b4b4;padding-bottom:1px}.v :last-child{color:#555}`,
`<div class="t"><span>12 marks</span><span>1 row by 12 columns</span><span>SUM of AGG(No of Trips): 1,155</span></div>
<div class="c u"><svg-icon name="user"></svg-icon><button>hemalatha go...<svg-icon name="caret"></svg-icon></button></div><div class="c s"></div><div class="c s"></div><div class="c w"></div>
<div class="c nav"><svg-icon name="first"></svg-icon><svg-icon name="prev"></svg-icon><svg-icon name="next"></svg-icon><svg-icon name="last"></svg-icon></div>
<div class="c v"><svg-icon name="grid9"></svg-icon><svg-icon name="film"></svg-icon><svg-icon name="full"></svg-icon></div>`);

define("task-app", `:host{display:block;width:49px}button{width:100%;height:40px;display:grid;place-items:center;position:relative}
:host([running]) button::after{content:"";position:absolute;bottom:0;left:4px;right:5px;height:3px;background:#0078d7}
:host([focused]) button{background:#eeeff5}:host([focused]) button::after{left:0;right:0}:host([focused]) svg-icon{background:#fff;padding:1px;border:1px solid #ccc}`,
el => `<button aria-label="${el.getAttribute("label")}"><svg-icon name="${el.getAttribute("icon")}"></svg-icon></button>`);
define("task-bar", `:host{display:flex;align-items:center;height:40px;color:#111;background:linear-gradient(90deg,#eeedda 0,#eeedda 4%,#d9d8e6 28%,#d3d6e4 50%,#d4d8e5 80%,#dde1e8 92%,#ecece0 97%,#e8ead8 100%)}
.start{width:48px;height:40px;display:grid;place-items:center}
label{width:344px;height:40px;background:#fff;border:1px solid #c0c0c0;display:flex;align-items:center;padding-left:11px;gap:10px}
input{flex:1;border:0;background:none;font-size:14px;padding:0 0 0 2px}input::placeholder{color:#222;opacity:1}
.tv{width:50px}.tray{margin-left:auto;display:flex;align-items:center;gap:9px}.clock{font-size:11px;line-height:18px;text-align:center;margin:-1px 4px 0 -1px}
.n{position:relative;margin-right:11px}.n span{position:absolute;left:14px;top:9px;font-size:12px;line-height:16px;width:7px;text-align:center}
.end{width:5px;height:40px;border-left:1px solid #b5b5b0;margin-left:-9px}`,
`<button class="start" aria-label="Start"><svg-icon name="win"></svg-icon></button>
<label><svg-icon name="searchBig"></svg-icon><input type="text" placeholder="Type here to search" aria-label="Search"></label>
<task-app class="tv" icon="taskview" label="Task view"></task-app><task-app icon="edge" label="Edge" running></task-app><task-app icon="explorer" label="File Explorer" running></task-app><task-app icon="store" label="Store"></task-app>
<task-app icon="game" label="Game"></task-app><task-app icon="mail" label="Mail"></task-app><task-app icon="chrome" label="Chrome"></task-app><task-app icon="vlc" label="VLC"></task-app><task-app icon="logoTask" label="Tableau" running focused></task-app>
<div class="tray"><svg-icon name="tray"></svg-icon><svg-icon name="wifi"></svg-icon><svg-icon name="batt"></svg-icon><svg-icon name="vol"></svg-icon>
<div class="clock">9:31 PM<br>10/20/2023</div><div class="n"><svg-icon name="notif"></svg-icon><span>1</span></div><div class="end"></div></div>`);

/* ---------- whole screen ---------- */
define("desktop-screen", `:host{display:flex;flex-direction:column;min-height:100vh;position:relative}
main{flex:1;display:grid;grid-template-columns:210px 154px minmax(780px,1fr);column-gap:6px;padding-right:166px}
.view{display:flex;flex-direction:column;gap:6px;padding-bottom:6px;min-width:0}viz-sheet{flex:1}
show-me{position:absolute;top:48px;right:4px;width:204px;z-index:1}
.mark{position:absolute;right:57px;bottom:73px;width:236px;z-index:2;color:rgba(130,130,130,.6);pointer-events:none;white-space:nowrap;font-size:14px;line-height:20px}
.mark b{display:block;font-weight:400;font-size:19px;line-height:26px}`,
`<title-bar>Tableau - story</title-bar><menu-bar></menu-bar><tool-bar></tool-bar>
<main><data-pane></data-pane><card-column></card-column><div class="view">
<shelf-row icon="cols" label="Columns"><field-pill><svg-icon slot="icon" name="plusbox"></svg-icon>MONTH(End Date..</field-pill></shelf-row><shelf-row icon="rows" label="Rows"></shelf-row><viz-sheet></viz-sheet></div></main>
<sheet-tabs></sheet-tabs><status-bar></status-bar><task-bar></task-bar><show-me></show-me>
<div class="mark"><b>Activate Windows</b>Go to Settings to activate Windows.</div>`);
</script>
</body>
</html>
